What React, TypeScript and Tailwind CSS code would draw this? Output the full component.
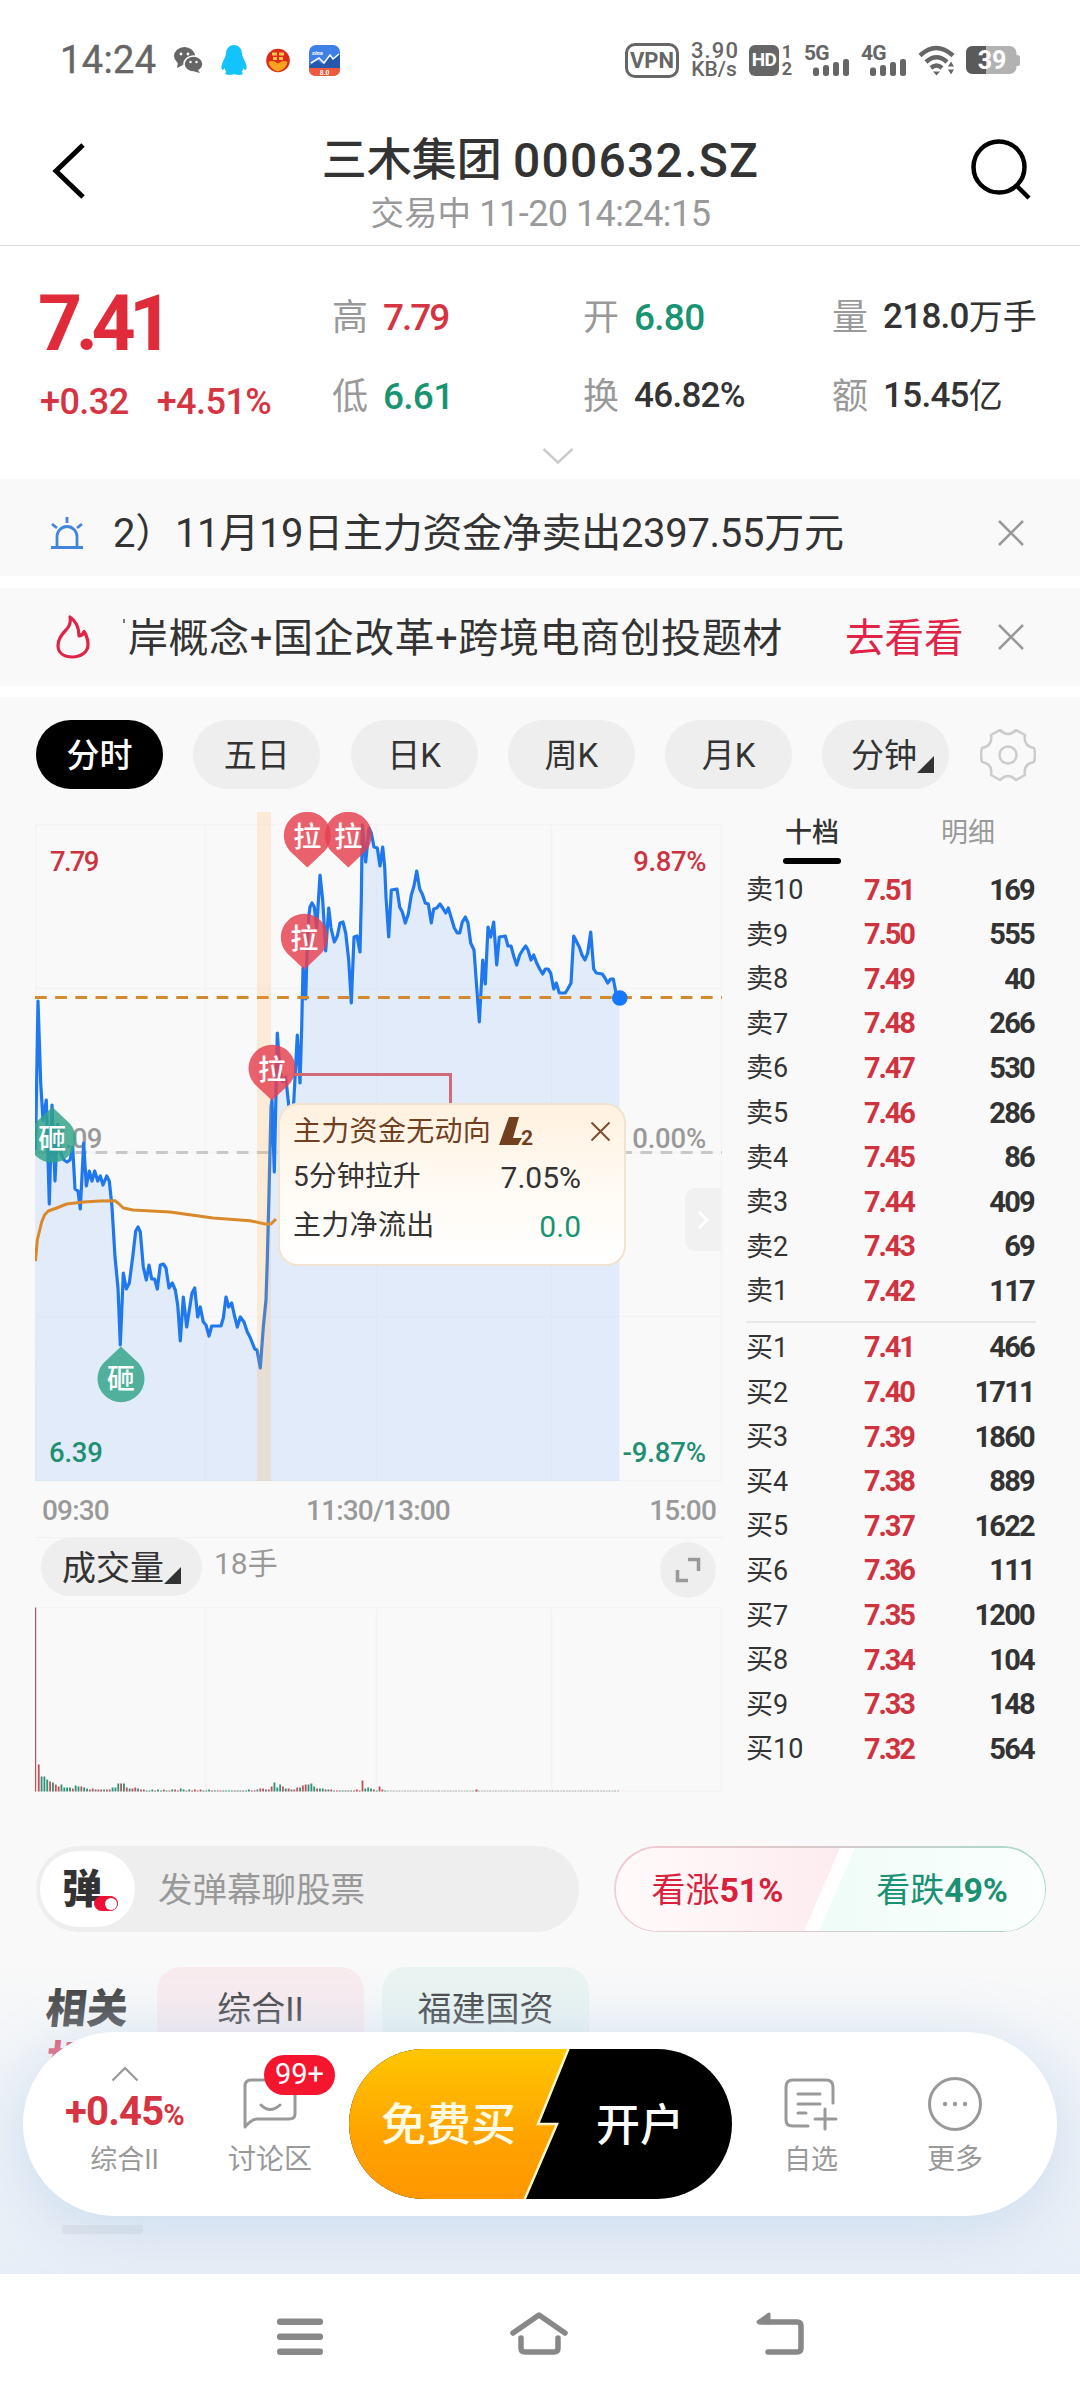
import clsx from "clsx";

type Pt = [number, number];

interface Level {
  label: string;
  price: string;
  volume: string;
}

const PRICE_LINE: Pt[] = [
  [35.5, 1150], [38, 1001], [40.7, 1083], [43, 1120], [46.3, 1100], [49.3, 1204], [52, 1105], [55, 1181],
  [57.7, 1124], [60.7, 1153], [64, 1160], [67, 1162], [70, 1160], [72.7, 1147], [75, 1189], [78, 1191],
  [80.3, 1209], [83.7, 1143], [86.3, 1186], [89.3, 1171], [92, 1181], [94.7, 1171], [97.7, 1181], [100.3, 1176],
  [103, 1185], [106.7, 1176], [109.3, 1181], [112, 1207], [115, 1257], [118, 1288], [120.3, 1345], [123.3, 1273],
  [126.3, 1289], [129.3, 1283], [132.7, 1257], [135.7, 1231], [138, 1227], [140.3, 1232], [143.3, 1267], [146.3, 1280],
  [149, 1265], [151.7, 1279], [154.7, 1279], [157.3, 1289], [160.3, 1265], [163.3, 1264], [166, 1268], [169, 1288],
  [172.3, 1283], [175.3, 1290], [177.7, 1305], [180.3, 1341], [183.3, 1297], [186.7, 1327], [189.3, 1310], [192, 1293],
  [194.7, 1288], [197.7, 1317], [200.3, 1307], [203.3, 1322], [206, 1325], [209, 1336], [211.7, 1326], [221, 1326],
  [223.3, 1318], [226, 1297], [228.7, 1307], [231.7, 1303], [234.3, 1315], [237.3, 1327], [240.3, 1317], [244, 1322],
  [247.3, 1332], [250, 1337], [254.7, 1349], [257, 1350], [260.3, 1368], [263.3, 1327], [266, 1300], [267.3, 1260],
  [269, 1193], [271, 1107], [272, 1100], [274.3, 1172], [276, 1093], [277.3, 1033], [280, 1070], [282.3, 1082],
  [285.7, 1077], [288.7, 1105], [291, 1117], [293.7, 1103], [297.3, 1035], [300, 1083], [301.7, 1027], [303, 968],
  [305.7, 999], [307.3, 943], [308.7, 917], [310, 907], [312, 903], [314.3, 907], [316.7, 928], [320, 875],
  [322.7, 900], [325.7, 951], [328.7, 908], [331, 928], [334.3, 942], [337.3, 936], [340, 923], [343, 922],
  [345.7, 933], [348.7, 960], [351.3, 1003], [354, 937], [357, 936], [360, 952], [361.3, 900], [362.3, 825],
  [365.7, 862], [369, 828], [371.3, 833], [374, 847], [377.3, 848], [380, 866], [382.7, 847], [384.7, 867],
  [386, 897], [388.7, 937], [391.3, 890], [397, 889], [399.7, 907], [402.3, 912], [405.3, 923], [408.3, 914],
  [411.3, 895], [414, 886], [416.7, 871], [419.7, 889], [422.3, 894], [425.3, 903], [428.3, 904], [431.3, 923],
  [433.7, 909], [436.7, 908], [440, 904], [442.7, 908], [445.7, 913], [448.3, 908], [451.3, 918], [454.3, 928],
  [457.3, 933], [459.7, 933], [462.3, 922], [465.3, 917], [468, 923], [470.7, 943], [474, 950], [476.7, 987],
  [479.3, 1022], [482.7, 960], [485.3, 984], [488, 927], [490.7, 937], [493.7, 922], [496.7, 965], [499.3, 937],
  [505.3, 936], [508, 946], [511, 946], [514, 957], [516.7, 965], [519.7, 955], [522.7, 950], [525.7, 946],
  [528, 950], [531, 960], [533.7, 955], [536.7, 963], [539.7, 969], [542.7, 974], [545.3, 969], [548, 969],
  [550.7, 973], [553.7, 989], [556.3, 983], [559.3, 993], [565.3, 993], [568.3, 988], [571, 983], [573.7, 936],
  [576.7, 942], [579.3, 947], [582, 955], [585, 960], [587.7, 953], [590.7, 932], [593.7, 969], [596.3, 973],
  [602.3, 974], [605, 978], [607.7, 983], [610.7, 979], [613.3, 979], [616, 993], [619.5, 998],
];

const AVERAGE_LINE: Pt[] = [
  [35.5, 1261], [37.3, 1240], [41.7, 1222], [44.5, 1215], [48.3, 1211], [56.7, 1208], [66.7, 1204], [83.3, 1202],
  [100, 1201], [115, 1200.7], [119, 1204], [123.3, 1208], [133, 1210], [170, 1212], [213, 1218], [250, 1220.7],
  [265, 1224], [271, 1224], [276, 1219],
];

// Bar heights, left to right, one per minute
const VOLUME = [
  184, 27, 15, 15, 12, 10, 9, 7, 5, 7, 4, 4, 4, 3, 6, 5, 5, 4, 3, 2, 3, 2, 2, 2, 2, 2, 2, 4, 4, 8, 8, 8, 4, 3, 3, 4,
  3, 2, 2, 1, 1, 2, 1, 2, 1, 2, 1, 1, 2, 2, 1, 3, 2, 1, 2, 1, 2, 1, 2, 1, 1, 2, 1, 1, 1, 1, 1, 1, 1, 1, 1, 1, 1, 1, 1,
  2, 1, 1, 2, 3, 3, 2, 2, 5, 9, 4, 7, 5, 3, 3, 2, 2, 4, 4, 6, 7, 7, 8, 5, 3, 3, 3, 2, 2, 2, 1, 1, 1, 1, 1, 1, 1, 1, 2,
  1, 11, 3, 4, 3, 2, 1, 5, 2, 1,
];
const VOLUME_COLORS = "rrgggrgrrggggrggrggrrgrrgrrgggrgrgrrgrrgggrggrgrgrrggrgrr";
const VOLUME_COUNT = 158;

const SELL_LEVELS: Level[] = [
  { label: "卖10", price: "7.51", volume: "169" },
  { label: "卖9", price: "7.50", volume: "555" },
  { label: "卖8", price: "7.49", volume: "40" },
  { label: "卖7", price: "7.48", volume: "266" },
  { label: "卖6", price: "7.47", volume: "530" },
  { label: "卖5", price: "7.46", volume: "286" },
  { label: "卖4", price: "7.45", volume: "86" },
  { label: "卖3", price: "7.44", volume: "409" },
  { label: "卖2", price: "7.43", volume: "69" },
  { label: "卖1", price: "7.42", volume: "117" },
];

const BUY_LEVELS: Level[] = [
  { label: "买1", price: "7.41", volume: "466" },
  { label: "买2", price: "7.40", volume: "1711" },
  { label: "买3", price: "7.39", volume: "1860" },
  { label: "买4", price: "7.38", volume: "889" },
  { label: "买5", price: "7.37", volume: "1622" },
  { label: "买6", price: "7.36", volume: "111" },
  { label: "买7", price: "7.35", volume: "1200" },
  { label: "买8", price: "7.34", volume: "104" },
  { label: "买9", price: "7.33", volume: "148" },
  { label: "买10", price: "7.32", volume: "564" },
];

const PERIODS = ["分时", "五日", "日K", "周K", "月K", "分钟"];

const toPoints = (pts: Pt[]) => pts.map((p) => p.join(",")).join(" ");

function SignalBars() {
  return (
    <svg width="36" height="17" viewBox="0 0 36 17" fill="#666">
      <rect x="0" y="8.5" width="6" height="8.5" rx="2.500" />
      <rect x="10" y="6" width="6" height="11" rx="2.500" />
      <rect x="20" y="3" width="6" height="14" rx="2.500" />
      <rect x="30" y="0" width="6" height="17" rx="2.500" />
    </svg>
  );
}

function Network({ label }: { label: string }) {
  return (
    <div className="flex h-[31px] w-[45px] flex-col">
      <span className="h-[14px] text-[21px] leading-[16px] font-bold tracking-[-0.04em]">{label}</span>
      <div className="ml-[9px]">
        <SignalBars />
      </div>
    </div>
  );
}

function StatusBar() {
  return (
    <div className="flex h-[120px] items-center pr-[60px] pl-[60px] text-[#666]">
      <span className="w-[113px] text-[38px] tracking-[0.01em] [-webkit-text-stroke:0.4px_#666]">14:24</span>
      <svg width="30" height="28" viewBox="0 0 30 28" fill="#666">
        <ellipse cx="11.5" cy="10" rx="10.5" ry="9" />
        <path d="M5 16l-1 6 6-3z" />
        <ellipse cx="20.500" cy="18" rx="9.500" ry="8" stroke="#fff" strokeWidth="1.500" />
        <path d="M24 23l3 4-6-1.500z" />
        <circle cx="8" cy="8" r="1.400" fill="#fff" />
        <circle cx="15" cy="8" r="1.400" fill="#fff" />
        <circle cx="17.500" cy="16" r="1.200" fill="#fff" />
        <circle cx="23.500" cy="16" r="1.200" fill="#fff" />
      </svg>
      <svg className="ml-[18px]" width="26" height="30" viewBox="0 0 26 30" fill="#12c4fb">
        <path d="M13 0C8 0 5 4 5 9c0 2-2.500 6-4 10-1 3-.5 6 .5 6 .8 0 1.500-1 2-2 .5 1.500 1 3 2 4C4.500 27.500 4 28 4.500 29c.6 1.200 6 1.200 8.500 0 2.500 1.200 7.900 1.200 8.500 0 .5-1 0-1.500-1-2 1-1 1.500-2.500 2-4 .5 1 1.200 2 2 2 1 0 1.500-3 .5-6-1.500-4-4-8-4-10 0-5-3-9-8-9z" />
      </svg>
      <svg className="ml-[19px]" width="24" height="25" viewBox="0 0 24 25">
        <circle cx="12" cy="12.500" r="11.800" fill="#dc2a17" />
        <path d="M2.500 14q3-2 7 0l2.500 1.500 2.500-1.500q4-2 7 0-1 7-9.500 9.500Q3.500 21 2.500 14z" fill="#fda21c" />
        <path d="M6 4.500h5v3H6zM13 4.500h5v3h-5zM7 9h4v3H7zM13 9h4v3h-4z" fill="#fbc04a" />
      </svg>
      <svg className="ml-[19px]" width="31" height="31" viewBox="0 0 31 31">
        <rect width="31" height="31" rx="7" fill="#3f7fe8" />
        <path d="M0 21l8-6 5 4 8-9 3 4 7-5v14H0z" fill="#2758ae" />
        <path d="M2 18l8-5 5 5 6-8 3 4 6-5" fill="none" stroke="#fff" strokeWidth="1.500" />
        <path d="M0 23h31v1q0 7-7 7H7q-7 0-7-7z" fill="#ef5a3c" />
        <text x="15.500" y="29.500" textAnchor="middle" fontSize="6.500" fontWeight="700" fill="#fff">8.0</text>
        <text x="3" y="10" fontSize="6" fontStyle="italic" fontWeight="700" fill="#fff">sina</text>
      </svg>

      <div className="ml-auto flex items-center">
        <div className="flex h-[35px] w-[54px] items-center justify-center rounded-[10px] border-[3px] border-[#666] text-[22px] font-bold">
          VPN
        </div>
        <div className="ml-[12px] w-[46px] text-center text-[22px] leading-[19px] font-medium">
          <div className="tracking-[0.05em]">3.90</div>
          <div className="text-[21px]">KB/s</div>
        </div>
        <div className="ml-[12px] flex h-[31px] w-[30px] items-center justify-center rounded-[6px] bg-[#666] text-[19px] font-bold tracking-[-0.03em] text-white">
          HD
        </div>
        <div className="ml-[2px] w-[12px] text-center text-[18px] leading-[17px] font-bold">
          <div>1</div>
          <div>2</div>
        </div>
        <div className="ml-[11px]">
          <Network label="5G" />
        </div>
        <div className="ml-[12px]">
          <Network label="4G" />
        </div>
        <svg className="ml-[12px]" width="38" height="31" viewBox="0 0 38 31" fill="none" stroke="#666" strokeWidth="4.500">
          <path d="M2 10.500q16-15 33 0" />
          <path d="M8 17q10.500-9.500 21 0" />
          <path d="M13 23q5.500-5 11 0" />
          <path d="M15 26.500h7l-3.500 4zM30 21.500l3-5 3 5zM30 24.500l3 5 3-5z" fill="#666" stroke="none" />
        </svg>
        <svg className="ml-[10px]" width="54" height="28" viewBox="0 0 54 28">
          <rect width="50.500" height="28" rx="7" fill="#b2b2b2" />
          <rect x="49" y="9" width="5" height="11" rx="2.500" fill="#b2b2b2" />
          <path d="M20 0H7Q0 0 0 7v14q0 7 7 7h13z" fill="#5a5a5a" />
          <text x="26" y="22.500" textAnchor="middle" fontSize="25" fontWeight="700" fill="#fff">39</text>
        </svg>
      </div>
    </div>
  );
}

function Header() {
  return (
    <header className="flex h-[126px] items-start justify-between border-b border-[#dcdcdc] pr-[48px] pl-[52px]">
      <svg className="mt-[23px]" width="36" height="56" viewBox="0 0 36 56" fill="none" stroke="#000" strokeWidth="5">
        <path d="M31 2L4 28l27 26" />
      </svg>
      <div className="mt-[13px] ml-[23px] text-center">
        <h1 className="flex h-[56px] items-center justify-center text-[45px] font-medium whitespace-pre text-[#333]">
          三木集团 <span className="text-[48px] tracking-[0.026em]">000632.SZ</span>
        </h1>
        <p className="flex h-[50px] items-center justify-center text-[33.500px] whitespace-pre text-[#999]">
          交易中 <span className="text-[36px] tracking-[-0.015em]">11-20 14:24:15</span>
        </p>
      </div>
      <svg className="mt-[19px]" width="62" height="62" viewBox="0 0 62 62" fill="none" stroke="#000" strokeWidth="4.500">
        <circle cx="29" cy="28" r="25.500" />
        <path d="M46 46l13 13" />
      </svg>
    </header>
  );
}

interface QuoteProps {
  label: string;
  value: string;
  unit?: string;
  tone?: string;
}

function Quote({ label, value, unit, tone }: QuoteProps) {
  return (
    <div className="flex items-center">
      <span className="text-[36px] text-[#999]">{label}</span>
      <span className={clsx("ml-[15px] font-medium", tone ?? "text-[35px] tracking-[-0.02em] text-[#333]")}>{value}</span>
      {unit && <span className="text-[34px] text-[#333]">{unit}</span>}
    </div>
  );
}

function Summary() {
  return (
    <section className="h-[233px]">
      <div className="flex h-[192px] pt-[32px] pl-[40px]">
        <div className="w-[292px] text-[#e02b3a]">
          <div className="-ml-[2px] flex h-[91px] items-center pt-[3px] text-[77px] font-bold tracking-[-0.085em]">7.41</div>
          <div className="flex h-[65px] items-center gap-[28px] text-[36px] font-medium tracking-[-0.015em] text-[#d63442]">
            <span>+0.32</span>
            <span>+4.51%</span>
          </div>
        </div>
        <div className="grid h-[158px] flex-1 grid-cols-[251px_249px_1fr] grid-rows-2">
          <Quote label="高" value="7.79" tone="text-[37px] tracking-[-0.055em] text-[#d63442]" />
          <Quote label="开" value="6.80" tone="text-[37px] tracking-[-0.02em] text-[#189472]" />
          <Quote label="量" value="218.0" unit="万手" />
          <Quote label="低" value="6.61" tone="text-[37px] tracking-[-0.02em] text-[#189472]" />
          <Quote label="换" value="46.82%" />
          <Quote label="额" value="15.45" unit="亿" />
        </div>
      </div>
      <svg className="ml-[542px]" width="32" height="36" viewBox="0 0 32 36" fill="none" stroke="#ccc" strokeWidth="2.500">
        <path d="M1.500 11L16 24.500 30.500 11" />
      </svg>
    </section>
  );
}

function CloseIcon() {
  return (
    <svg width="28" height="28" viewBox="0 0 28 28" fill="none" stroke="#999" strokeWidth="2.500">
      <path d="M2 2l24 24M26 2L2 26" />
    </svg>
  );
}

function Notices() {
  return (
    <>
      <div className="flex h-[97px] items-center bg-[#f9f9f9] pt-[10px] pl-[50px] text-[40px] text-[#333]">
        <svg width="34" height="34" viewBox="0 0 34 34" fill="none" stroke="#4285dc" strokeWidth="2.800">
          <path d="M1 31.500h32M7 31V20.500a10 10 0 0 1 20 0V31M17 1v6M2 8l5 4M32 8l-5 4" />
        </svg>
        <span className="mt-[3px] ml-[29px] tracking-[-0.3px] whitespace-nowrap">2）11月19日主力资金净卖出2397.55万元</span>
        <span className="mr-[55px] ml-auto">
          <CloseIcon />
        </span>
      </div>
      <div className="mt-[12px] mb-[11px] flex h-[98px] items-center bg-[#f9f9f9] pl-[55px] text-[40px] text-[#333]">
        <svg width="36" height="44" viewBox="0 0 36 44" fill="none" stroke="#e02447" strokeWidth="3.200" strokeLinejoin="round">
          <path d="M15 2q1.500 7-4 13-8 8-8 15.500C3 38 9 42 17.500 42S33 37 33 29.500q0-7-4-13-1 4-5 4.500Q24 8 15 2z" />
        </svg>
        <div className="mt-[3px] ml-[32px] flex w-[666px] items-center overflow-hidden tracking-[0.55px] whitespace-nowrap">
          <span className="mt-[10px] mr-[3px] h-[4px] w-[2px] self-start bg-[#777]" />
          岸概念+国企改革+跨境电商创投题材
        </div>
        <span className="mt-[3px] ml-[56px] text-[39.500px] text-[#e02447]">去看看</span>
        <span className="mr-[55px] ml-auto">
          <CloseIcon />
        </span>
      </div>
    </>
  );
}

function CornerMark() {
  return (
    <svg width="17" height="17" viewBox="0 0 17 17" fill="#333">
      <path d="M17 0v17H0z" />
    </svg>
  );
}

function PeriodTabs() {
  return (
    <nav className="flex h-[69px] items-center gap-[30.300px] pl-[36px] text-[33px]">
      {PERIODS.map((name, i) => (
        <div
          key={name}
          className={clsx(
            "flex h-[69px] w-[127px] items-center justify-center rounded-full pt-[2px]",
            i === 0 ? "bg-black font-medium text-white" : "bg-[#eee] text-[#333]",
          )}
        >
          {name}
          {name === "分钟" && (
            <span className="mt-[17px] -mr-[13px]">
              <CornerMark />
            </span>
          )}
        </div>
      ))}
      <svg width="56" height="52" viewBox="-28 -26 56 52" fill="none" stroke="#ccc" strokeWidth="2.500" strokeLinejoin="round">
        <circle r="8.500" />
        <path d="M-8-25Q0-17 8-25L17-20Q15-9 26-7Q28 0 26 7Q15 9 17 20L8 25Q0 17-8 25L-17 20Q-15 9-26 7Q-28 0-26-7Q-15-9-17-20Z" />
      </svg>
    </nav>
  );
}

interface PinProps {
  x: number;
  tip: number;
  down?: boolean;
}

// Teardrop marker: 拉 points down at a rally, 砸 points up at a dump
function Pin({ x, tip, down = false }: PinProps) {
  return (
    <g transform={`translate(${x} ${tip})`}>
      <path
        transform={down ? undefined : "scale(1 -1)"}
        d="M0 0L17.500 16.500A23.500 23.500 0 1 1 -17.500 16.500Z"
        fill={down ? "#2fa287" : "#e6404f"}
        fillOpacity="0.820"
      />
      <text y={down ? 42 : -21} textAnchor="middle" fontSize="28" fontWeight="500" fill="#fff">
        {down ? "砸" : "拉"}
      </text>
    </g>
  );
}

function PriceChart() {
  return (
    <svg className="block" width="688" height="670" viewBox="35 812 688 670" fill="none">
      <path d="M35 824.500H722M35 988.500H722M35 1152.500H722M35 1316.500H722M35 1480.500H722M35.500 824V1481M205.500 824V1481M376.500 824V1481M551.500 824V1481M721.500 824V1481" stroke="#f4f4f5" strokeWidth="1.500" />
      <polygon points={`35,1481 ${toPoints(PRICE_LINE)} 619.5,1481`} fill="#4c96ff" fillOpacity="0.130" />
      <path d="M35 1152.500H722" stroke="#c8c8c8" strokeWidth="3" strokeDasharray="11.700 8.480" />
      <g fontSize="27.500" fontWeight="500" letterSpacing="-0.700">
        <text x="50" y="871" letterSpacing="-1.700" fill="#cc3443">7.79</text>
        <text x="50" y="1148" fill="#999">7.09</text>
        <text x="49" y="1462" letterSpacing="-0.200" fill="#1f8f73">6.39</text>
        <text x="706" y="871" textAnchor="end" letterSpacing="-0.400" fill="#cc3443">9.87%</text>
        <text x="706" y="1148" textAnchor="end" letterSpacing="-0.200" fill="#999">0.00%</text>
        <text x="706" y="1462" textAnchor="end" letterSpacing="-0.100" fill="#1f8f73">-9.87%</text>
      </g>
      <polyline points={toPoints(PRICE_LINE)} stroke="#1f78ee" strokeWidth="3.200" strokeLinejoin="round" />
      <polyline points={toPoints(AVERAGE_LINE)} stroke="#d8892b" strokeWidth="3" strokeLinejoin="round" />
      <path d="M35 997.500H722" stroke="#d3892f" strokeWidth="3" strokeDasharray="11.700 8.480" />
      <rect x="257" y="812" width="14" height="669" fill="#ffa940" fillOpacity="0.190" />
      <circle cx="619.800" cy="998" r="7.800" fill="#1677ff" />
      <path d="M294 1074.500H450.500V1104" stroke="#d16b79" strokeWidth="3" />
      <Pin x={307.3} tip={867.5} />
      <Pin x={348.3} tip={867.5} />
      <Pin x={304.3} tip={969.5} />
      <Pin x={272} tip={1100.5} />
      <Pin x={52.3} tip={1107} down />
      <Pin x={121} tip={1346.5} down />
    </svg>
  );
}

function CapitalTip() {
  return (
    <div className="absolute top-[291px] left-[243px] flex h-[163px] w-[348px] flex-col rounded-[20px] border-2 border-[#f1e3cd] bg-linear-to-b from-[#fff1df] via-[#fffaf3] to-white pt-[3px] pl-[13px] text-[28px] text-[#333]">
      <div className="flex h-[48px] items-center text-[#70401f]">
        <span className="tracking-[0.3px]">主力资金无动向</span>
        <svg className="ml-[6px]" width="38" height="30" viewBox="0 0 38 30">
          <path d="M12 0h10l-6 21h9l-4 7H2z" fill="#70401f" />
          <text x="24" y="28" fontSize="21" fontWeight="700" fill="#70401f">2</text>
        </svg>
        <svg className="ml-[55px]" width="22" height="22" viewBox="0 0 22 22" fill="none" stroke="#7b4e30" strokeWidth="2">
          <path d="M1.500 1.500l18 18M19.500 1.500l-18 18" />
        </svg>
      </div>
      <div className="flex h-[42px] items-center justify-between pr-[43px]">
        <span>5分钟拉升</span>
        <span className="text-[30px]">7.05%</span>
      </div>
      <div className="mt-[3px] flex h-[50px] items-center justify-between pr-[43px]">
        <span className="tracking-[0.3px]">主力净流出</span>
        <span className="text-[30px] text-[#189472]">0.0</span>
      </div>
    </div>
  );
}

function VolumeChart() {
  return (
    <svg className="block" width="688" height="185" viewBox="0 0 688 185" fill="none">
      <path d="M0 .5H687M0 184H687M.5 0V184M170.500 0V184M341.500 0V184M516.500 0V184M686.500 0V184" stroke="#f4f4f5" strokeWidth="1.500" />
      {VOLUME.map((h, i) => (
        <rect
          key={i}
          x={i * 2.84}
          y={184.5 - h}
          width={i === 0 ? 1.2 : 1.8}
          height={h}
          fill={VOLUME_COLORS[i % VOLUME_COLORS.length] === "r" ? "#c2505a" : "#2f9277"}
        />
      ))}
      {/* thin afternoon trading, nearly flat */}
      <path d="M352 184H584" stroke="#2f9277" strokeOpacity="0.600" strokeWidth="1" strokeDasharray="1.800 3.880" />
      <path d="M355 184H584" stroke="#c2505a" strokeOpacity="0.500" strokeWidth="1" strokeDasharray="1.800 3.880" />
      <path d="M441.500 184.500v-2" stroke="#c2505a" strokeWidth="2" />
    </svg>
  );
}

function ChartColumn() {
  return (
    <div className="relative w-[688px]">
      <PriceChart />
      <CapitalTip />
      <div className="absolute top-[376px] left-[650px] flex h-[63px] w-[36px] items-center justify-center rounded-l-[10px] bg-[#f1f1f1]">
        <svg width="12" height="20" viewBox="0 0 12 20" fill="none" stroke="#fff" strokeWidth="2.500">
          <path d="M2 2l8 8-8 8" />
        </svg>
      </div>
      <div className="flex h-[56px] items-center justify-between border-b border-[#f2f2f3] pt-[2px] pr-[7px] pl-[7px] text-[28px] font-medium tracking-[-0.03em] text-[#999]">
        <span>09:30</span>
        <span className="ml-[-2px]">11:30/13:00</span>
        <span>15:00</span>
      </div>
      <div className="flex h-[69px] items-start pl-[6px]">
        <div className="flex h-[58px] w-[161px] items-center rounded-full bg-[#eee] pt-[2px] pl-[21px] text-[34px] text-[#333]">
          成交量
          <span className="mt-[15px]">
            <CornerMark />
          </span>
        </div>
        <span className="mt-[3px] ml-[12px] text-[30px] text-[#999]">18手</span>
        <div className="mt-[4px] mr-[7px] ml-auto flex size-[56px] items-center justify-center rounded-full bg-[#eee]">
          <svg width="26" height="26" viewBox="0 0 26 26" fill="none" stroke="#999" strokeWidth="3.500">
            <path d="M13 2.500h10.500V14M2.500 13v10.500H13" />
          </svg>
        </div>
      </div>
      <VolumeChart />
    </div>
  );
}

function LevelRow({ level }: { level: Level }) {
  return (
    <div className="flex h-[44.600px] items-center text-[#333]">
      <span className="w-[118px] text-[27px]">{level.label}</span>
      <span className="text-[29px] font-bold tracking-[-0.075em] text-[#d03340]">{level.price}</span>
      <span className="-mr-[1px] ml-auto text-[29px] font-bold tracking-[-0.06em]">{level.volume}</span>
    </div>
  );
}

function OrderBook() {
  return (
    <div className="ml-[23px] w-[290px]">
      <div className="flex h-[56px] text-[27px]">
        <div className="ml-[37px] flex w-[58px] flex-col items-center">
          <span className="h-[46px] leading-[42px] font-medium text-[#333]">十档</span>
          <span className="h-[6px] w-[58px] rounded-full bg-black" />
        </div>
        <span className="ml-[100px] h-[46px] leading-[42px] text-[#999]">明细</span>
      </div>
      <div className="pr-[3px]">
        {SELL_LEVELS.map((l) => (
          <LevelRow key={l.label} level={l} />
        ))}
      </div>
      <div className="mt-[7px] mb-[3px] h-[2px] bg-[#e8e8e8]" />
      <div className="pr-[3px]">
        {BUY_LEVELS.map((l) => (
          <LevelRow key={l.label} level={l} />
        ))}
      </div>
    </div>
  );
}

function DanmuRow() {
  return (
    <div className="mt-[54px] flex h-[86px] items-center pl-[36px]">
      <div className="flex h-[86px] w-[543px] items-center rounded-full bg-[#eee] pl-[4px]">
        <div className="relative flex h-[76px] w-[95px] items-center rounded-full bg-white pt-[2px] pl-[22px] text-[40px] font-black text-[#333]">
          弹
          <span className="absolute top-[45px] left-[54px] flex h-[15px] w-[24px] items-center justify-end rounded-full border-[1.500px] border-[#ee1133] bg-[#ee1133]">
            <span className="size-[12px] rounded-full bg-white" />
          </span>
        </div>
        <span className="mt-[3px] ml-[23px] text-[34.500px] text-[#999]">发弹幕聊股票</span>
      </div>
      <div className="ml-[35px] rounded-full bg-linear-to-r from-[#f3cdd4] via-[#d9c9cb] via-45% to-[#a8d9cb] p-[1.500px]">
        <div className="relative flex h-[83px] w-[429px] items-center overflow-hidden rounded-full bg-white">
          <svg className="absolute inset-0" width="429" height="83" viewBox="0 0 429 83">
            <defs>
              <linearGradient id="bull">
                <stop offset="0" stopColor="#fffafb" />
                <stop offset="1" stopColor="#fdecef" />
              </linearGradient>
              <linearGradient id="bear">
                <stop offset="0" stopColor="#effcf8" />
                <stop offset="1" stopColor="#fbfffe" />
              </linearGradient>
            </defs>
            <path d="M0 0H224L188 83H0z" fill="url(#bull)" />
            <path d="M239 0H429V83H203z" fill="url(#bear)" />
          </svg>
          <div className="relative flex flex-1 items-center justify-between pt-[2px] pr-[37px] pl-[36px] text-[34px]">
            <span className="text-[#d9213c]">
              看涨<b className="tracking-[-0.005em]">51%</b>
            </span>
            <span className="text-[#1a9172]">
              看跌<b className="tracking-[-0.01em]">49%</b>
            </span>
          </div>
        </div>
      </div>
    </div>
  );
}

function RelatedRow() {
  return (
    <div className="mt-[35px] flex h-[120px] items-start pl-[46px] text-[34px] text-[#333]">
      <div className="w-[111px] text-[41px] leading-[52px] font-black">
        <div className="mt-[16px] -skew-x-6">相关</div>
        <div className="-skew-x-6 text-[#e02447]">相关</div>
      </div>
      <div className="flex h-[84px] w-[207px] items-center justify-center rounded-t-[24px] bg-[#f9ebee]">综合II</div>
      <div className="ml-[18px] flex h-[84px] w-[207px] items-center justify-center rounded-t-[24px] bg-[#e9f4f1]">
        福建国资
      </div>
    </div>
  );
}

function Dock() {
  return (
    <div className="absolute top-[2032px] left-[23px] flex h-[184px] w-[1034px] rounded-full bg-white text-[27px] text-[#999] shadow-[0_10px_60px_rgba(150,190,225,0.400)]">
      <div className="ml-[24px] flex w-[155px] flex-col items-center">
        <svg className="mt-[34px]" width="28" height="16" viewBox="0 0 28 16" fill="none" stroke="#999" strokeWidth="2.200">
          <path d="M1.500 14.500L14 2l12.500 12.500" />
        </svg>
        <div className="mt-[5px] h-[48px] text-[40px] leading-[50px] font-bold tracking-[-0.02em] whitespace-nowrap text-[#d63442]">
          +0.45<span className="text-[29px]">%</span>
        </div>
        <span className="leading-[50px]">综合II</span>
      </div>
      <div className="relative flex w-[136px] flex-col items-center">
        <svg className="mt-[45px]" width="54" height="54" viewBox="0 0 54 54" fill="none" stroke="#999" strokeWidth="3" strokeLinejoin="round" strokeLinecap="round">
          <path d="M2 49V9q0-6 6-6h38q6 0 6 6v28q0 5-6 5H14q-5 0-12 8zM18 28q9 9 19 0" />
        </svg>
        <span className="mt-[4px] text-[28px] leading-[50px]">讨论区</span>
        <span className="absolute top-[23px] left-[62px] flex h-[40px] w-[71px] items-center justify-center rounded-full bg-[#f5152f] text-[29px] text-white">
          99+
        </span>
      </div>
      <div className="relative mt-[17px] ml-[11px] flex h-[150px] w-[383px] items-center overflow-hidden rounded-full bg-black text-[45px] font-medium">
        <svg className="absolute inset-0" width="383" height="150" viewBox="0 0 383 150">
          <defs>
            <linearGradient id="buy" x1="0" y1="0" x2="0" y2="1">
              <stop offset="0" stopColor="#ffc800" />
              <stop offset="0.600" stopColor="#ffa200" />
              <stop offset="1" stopColor="#ff9700" />
            </linearGradient>
          </defs>
          <path d="M-6-4H221L189 75H208L174 154H-6z" fill="url(#buy)" stroke="#fff7c9" strokeWidth="2.500" />
        </svg>
        <span className="relative mt-[4px] ml-[32px] text-[#fffbe6]">免费买</span>
        <span className="relative mt-[4px] ml-[80px] text-[44px] text-white">开户</span>
      </div>
      <div className="ml-[14px] flex w-[130px] flex-col items-center">
        <svg className="mt-[45px]" width="54" height="54" viewBox="0 0 54 54" fill="none" stroke="#999" strokeWidth="3" strokeLinecap="round">
          <path d="M49 26V10q0-7-7-7H9Q2 3 2 10v33q0 6 7 6h15M14 17h22M14 27h22M14 36h8M41 32v20M31 42h21" />
        </svg>
        <span className="mt-[4px] leading-[50px]">自选</span>
      </div>
      <div className="ml-[14px] flex w-[130px] flex-col items-center">
        <svg className="mt-[44px]" width="56" height="56" viewBox="0 0 56 56" fill="none" stroke="#999" strokeWidth="3">
          <circle cx="28" cy="28" r="25.500" />
          <g fill="#999" stroke="none">
            <circle cx="18" cy="28" r="2.200" />
            <circle cx="28" cy="28" r="2.200" />
            <circle cx="38" cy="28" r="2.200" />
          </g>
        </svg>
        <span className="mt-[3px] text-[28px] leading-[50px]">更多</span>
      </div>
    </div>
  );
}

function SystemNav() {
  return (
    <div className="absolute inset-x-0 bottom-0 flex h-[126px] justify-between bg-white pr-[275px] pl-[277px]">
      <svg className="mt-[36px]" width="46" height="52" viewBox="0 0 46 52" fill="#888">
        <rect y="8.500" width="46" height="6.500" rx="3" />
        <rect y="23.500" width="46" height="6.500" rx="3" />
        <rect y="38.500" width="46" height="6.500" rx="3" />
      </svg>
      <svg className="mt-[36px]" width="60" height="52" viewBox="0 0 60 52" fill="none" stroke="#888" strokeWidth="5.500" strokeLinecap="round" strokeLinejoin="round">
        <path d="M4 23L30 5l26 18M12 28v10q0 4 4 4h29q4 0 4-4V28" />
      </svg>
      <svg className="mt-[36px]" width="50" height="52" viewBox="0 0 50 52" fill="none" stroke="#888" strokeWidth="5.500" strokeLinecap="round" strokeLinejoin="round">
        <path d="M13 42h29q4 0 4-4V16q0-4-4-4H5" />
        <path d="M3 12L14 4v9z" fill="#888" strokeWidth="3" />
      </svg>
    </div>
  );
}

export default function App() {
  return (
    <div className="relative h-[2400px] w-[1080px] overflow-hidden bg-white font-['Roboto','Noto_Sans_CJK_SC',sans-serif]">
      <StatusBar />
      <Header />
      <Summary />
      <Notices />
      <main className="h-[1577px] bg-[#f9f9f9] pt-[23px]">
        <PeriodTabs />
        <div className="mt-[23px] flex h-[980px] pl-[35px]">
          <ChartColumn />
          <OrderBook />
        </div>
        <DanmuRow />
        <RelatedRow />
      </main>

      {/* Fade behind the dock */}
      <div className="absolute inset-x-0 top-[1960px] h-[314px] bg-linear-to-b from-[#e8eef7]/0 via-[#e8eef7]/50 via-40% to-[#e8eef7]" />
      <div className="absolute top-[2225px] left-[62px] h-[9px] w-[81px] rounded-[2px] bg-[#dfe4eb]" />
      <Dock />
      <SystemNav />
    </div>
  );
}
